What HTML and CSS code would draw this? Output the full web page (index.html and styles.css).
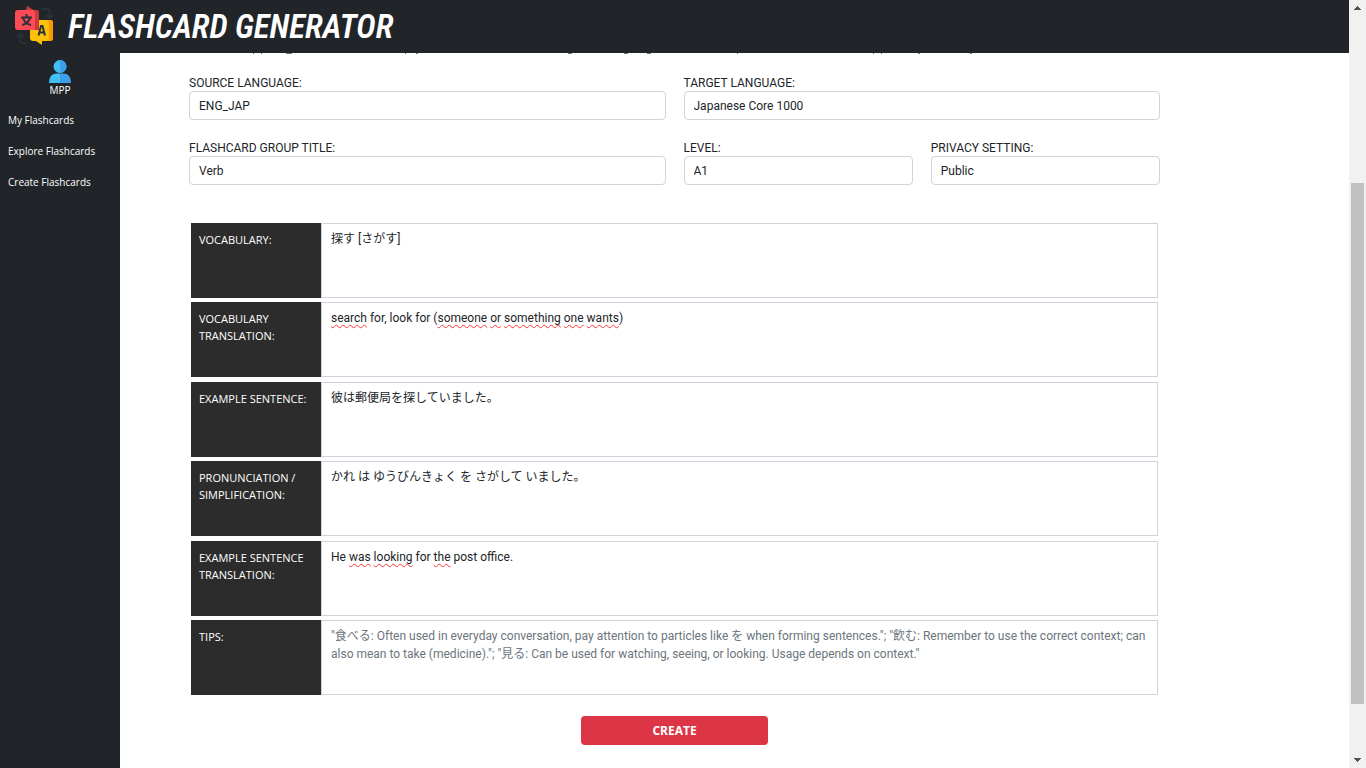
FILE: index.html
```html
<!DOCTYPE html>
<html lang="en">
<head>
<meta charset="utf-8">
<title>Flashcard Generator</title>
<link rel="stylesheet" href="styles.css">
</head>
<body>
<div class="page">
  <header class="topbar">
    <svg class="logo" width="40" height="40" viewBox="0 0 40 40" aria-hidden="true">
      <g fill="none" stroke="#263238" stroke-width="2">
        <path d="M26 3h6.500q2 0 2 2v6M31 8.500l3.500 4 3.500-4M12 37H7.500q-2 0-2-2v-6M2 31.500l3.500-4 3.500 4"/>
      </g>
      <path fill="#ffc107" d="M15 14h20q3 0 3 3v15q0 3-3 3h-8v4l-6-4h-3q-3 0-3-3z"/>
      <path fill="#ff9800" d="M31 14h4q3 0 3 3v15q0 3-3 3h-4q3 0 3-3V17q0-3-3-3z"/>
      <path fill="#ff4b55" d="M3 4h9V0l6 4h3q3 0 3 3v17H3q-3 0-3-3V7q0-3 3-3z"/>
      <path fill="#c73a42" d="M12 0l6 4h3q3 0 3 3v17h-4V7q0-3-3-3h-6z"/>
      <path fill="none" stroke="#263238" stroke-width="2" d="M11.500 8v3M6 11.500h11M8 12q2 6 8 7M15 12q-2 6-8 7"/>
      <path fill="none" stroke="#263238" stroke-width="2" d="M23.500 29.500L26 20h1.500L30 29.500M24.500 26.500h5"/>
    </svg>
    <h1 class="brand">FLASHCARD GENERATOR</h1>
  </header>
  <div class="body">
    <nav class="sidebar">
      <div class="user">
        <svg width="22" height="23" viewBox="0 0 22 23" aria-hidden="true">
          <circle cx="11" cy="6.500" r="6.500" fill="#43c0f3"/>
          <path fill="#3d9fe8" d="M11 0a6.500 6.500 0 0 1 0 13z"/>
          <path fill="#43c0f3" d="M0 23q0-9 7-9.500h4V23z"/>
          <path fill="#3d9fe8" d="M22 23q0-9-7-9.500h-4V23z"/>
        </svg>
        <span>MPP</span>
      </div>
      <a href="#">My Flashcards</a>
      <a href="#">Explore Flashcards</a>
      <a href="#">Create Flashcards</a>
    </nav>
    <main class="content">
      <svg class="scrolled" width="720" height="2" viewBox="0 0 720 2" aria-hidden="true">
        <path fill="#6d7378" d="M1 0h1v1h-1zM9 0h1v1h-1zM34 0h6v1h-6zM153 0h1v1h-1zM164 0h2v1h-2zM316 0h4v1h-4zM372 0h4v1h-4zM395 0h4v1h-4zM485 0h1v1h-1zM621 0h1v1h-1zM629 0h1v1h-1zM666 0h2v1h-2zM718 0h4v1h-4z"/>
      </svg>
      <form>
        <div class="fields">
          <div class="field wide"><label for="source">SOURCE LANGUAGE:</label><input id="source" type="text" value="ENG_JAP"></div>
          <div class="field wide"><label for="target">TARGET LANGUAGE:</label><input id="target" type="text" value="Japanese Core 1000"></div>
          <div class="field wide"><label for="title">FLASHCARD GROUP TITLE:</label><input id="title" type="text" value="Verb"></div>
          <div class="field"><label for="level">LEVEL:</label><input id="level" type="text" value="A1"></div>
          <div class="field"><label for="privacy">PRIVACY SETTING:</label><input id="privacy" type="text" value="Public"></div>
        </div>
        <div class="cards">
          <div class="card"><label for="vocab">VOCABULARY:</label><div class="editor"><textarea id="vocab" spellcheck="false">探す [さがす]</textarea></div></div>
          <div class="card"><label for="vocab-tr">VOCABULARY TRANSLATION:</label><div class="editor"><div class="marks" aria-hidden="true"><u>search</u> for, look for (<u>someone</u> <u>or</u> <u>something</u> <u>one</u> <u>wants</u>)</div><textarea id="vocab-tr" spellcheck="false">search for, look for (someone or something one wants)</textarea></div></div>
          <div class="card"><label for="example">EXAMPLE SENTENCE:</label><div class="editor"><textarea id="example" spellcheck="false">彼は郵便局を探していました。</textarea></div></div>
          <div class="card"><label for="pron">PRONUNCIATION / SIMPLIFICATION:</label><div class="editor"><textarea id="pron" spellcheck="false">かれ は ゆうびんきょく を さがして いました。</textarea></div></div>
          <div class="card"><label for="example-tr">EXAMPLE SENTENCE TRANSLATION:</label><div class="editor"><div class="marks" aria-hidden="true">He <u>was</u> <u>looking</u> for <u>the</u> post office.</div><textarea id="example-tr" spellcheck="false">He was looking for the post office.</textarea></div></div>
          <div class="card"><label for="tips">TIPS:</label><div class="editor"><textarea id="tips" spellcheck="false" placeholder="&quot;食べる: Often used in everyday conversation, pay attention to particles like を when forming sentences.&quot;; &quot;飲む: Remember to use the correct context; can also mean to take (medicine).&quot;; &quot;見る: Can be used for watching, seeing, or looking. Usage depends on context.&quot;"></textarea></div></div>
        </div>
        <button class="create" type="submit">CREATE</button>
      </form>
    </main>
  </div>
</div>
<div class="scrollbar" aria-hidden="true">
  <svg width="17" height="17" viewBox="0 0 17 17"><path fill="#505050" d="M8 6h1v1h1v1h1v1h1v1H5V9h1V8h1V7h1z"/></svg>
  <div class="track"><div class="thumb"></div></div>
  <svg width="17" height="17" viewBox="0 0 17 17"><path fill="#505050" d="M5 7h7v1h-1v1h-1v1H9v1H8v-1H7V9H6V8H5z"/></svg>
</div>
</body>
</html>
```
FILE: styles.css
```css
* { box-sizing: border-box; }
body {
  margin: 0;
  min-height: 100vh;
  display: flex;
  background: #fff;
  color: #212529;
  font: 12px/18px Roboto, "Noto Sans CJK JP", sans-serif;
}
.page { flex: 1; display: flex; flex-direction: column; }
.topbar {
  height: 53px;
  padding: 0 15px;
  display: flex;
  align-items: center;
  gap: 13px;
  background: #212529;
}
.logo { margin-bottom: 2px; }
.brand {
  margin: 0;
  color: #fff;
  font: italic 600 33px/40px "Roboto Condensed", Roboto, sans-serif;
  white-space: nowrap;
}
.body { flex: 1; display: flex; }
.sidebar {
  width: 120px;
  padding: 7px 8px;
  display: flex;
  flex-direction: column;
  gap: 13px;
  background: #212529;
  color: #fff;
  font-family: "Open Sans", sans-serif;
  font-size: 10px;
}
.user {
  display: flex;
  flex-direction: column;
  align-items: center;
  line-height: 15px;
}
.sidebar a { color: #fff; text-decoration: none; white-space: nowrap; }
.content { flex: 1; padding: 0 189px 23px 69px; }
.scrolled { display: block; margin: 0 63px 20px; }
.fields { display: grid; grid-template-columns: repeat(4, 1fr); gap: 20px 18px; }
.field { display: flex; flex-direction: column; }
.wide { grid-column: span 2; }
.field label { line-height: 16px; }
.field input {
  width: 100%;
  height: 29px;
  padding: 0 9px;
  border: 1px solid #ced4da;
  border-radius: 4px;
  background: #fff;
  color: inherit;
  font: inherit;
}
.cards {
  min-height: 472px;
  margin: 38px 2px 21px;
  display: grid;
  align-content: space-between;
}
.card { display: flex; min-height: 75px; }
.card label {
  width: 130px;
  padding: 8px;
  background: #2c2c2c;
  color: #fff;
  font-family: "Open Sans", sans-serif;
  font-size: 11px;
  line-height: 17px;
}
.editor { flex: 1; display: grid; }
.editor textarea, .marks {
  grid-area: 1 / 1;
  padding: 6px 9px;
  border: 1px solid #ced4da;
  font: inherit;
}
.editor textarea {
  width: 100%;
  display: block;
  resize: none;
  overflow: hidden;
  background: transparent;
  color: inherit;
}
.editor textarea::placeholder { color: #6c757d; opacity: 1; }
.marks { color: transparent; }
.marks u { text-decoration: underline wavy #f33 1px; text-underline-offset: 2px; text-decoration-skip-ink: none; }
.create {
  display: block;
  width: 187px;
  height: 29px;
  margin: 0 auto;
  border: 0;
  border-radius: 4px;
  background: #dc3545;
  color: #fff;
  font-family: "Open Sans", sans-serif;
  font-size: 12px;
  font-weight: 700;
}
.scrollbar { width: 17px; display: flex; flex-direction: column; background: #f1f1f1; }
.scrollbar svg { display: block; }
.track { flex: 1; padding: 166px 2px 47px; display: flex; }
.thumb { flex: 1; background: #c1c1c1; }
```
